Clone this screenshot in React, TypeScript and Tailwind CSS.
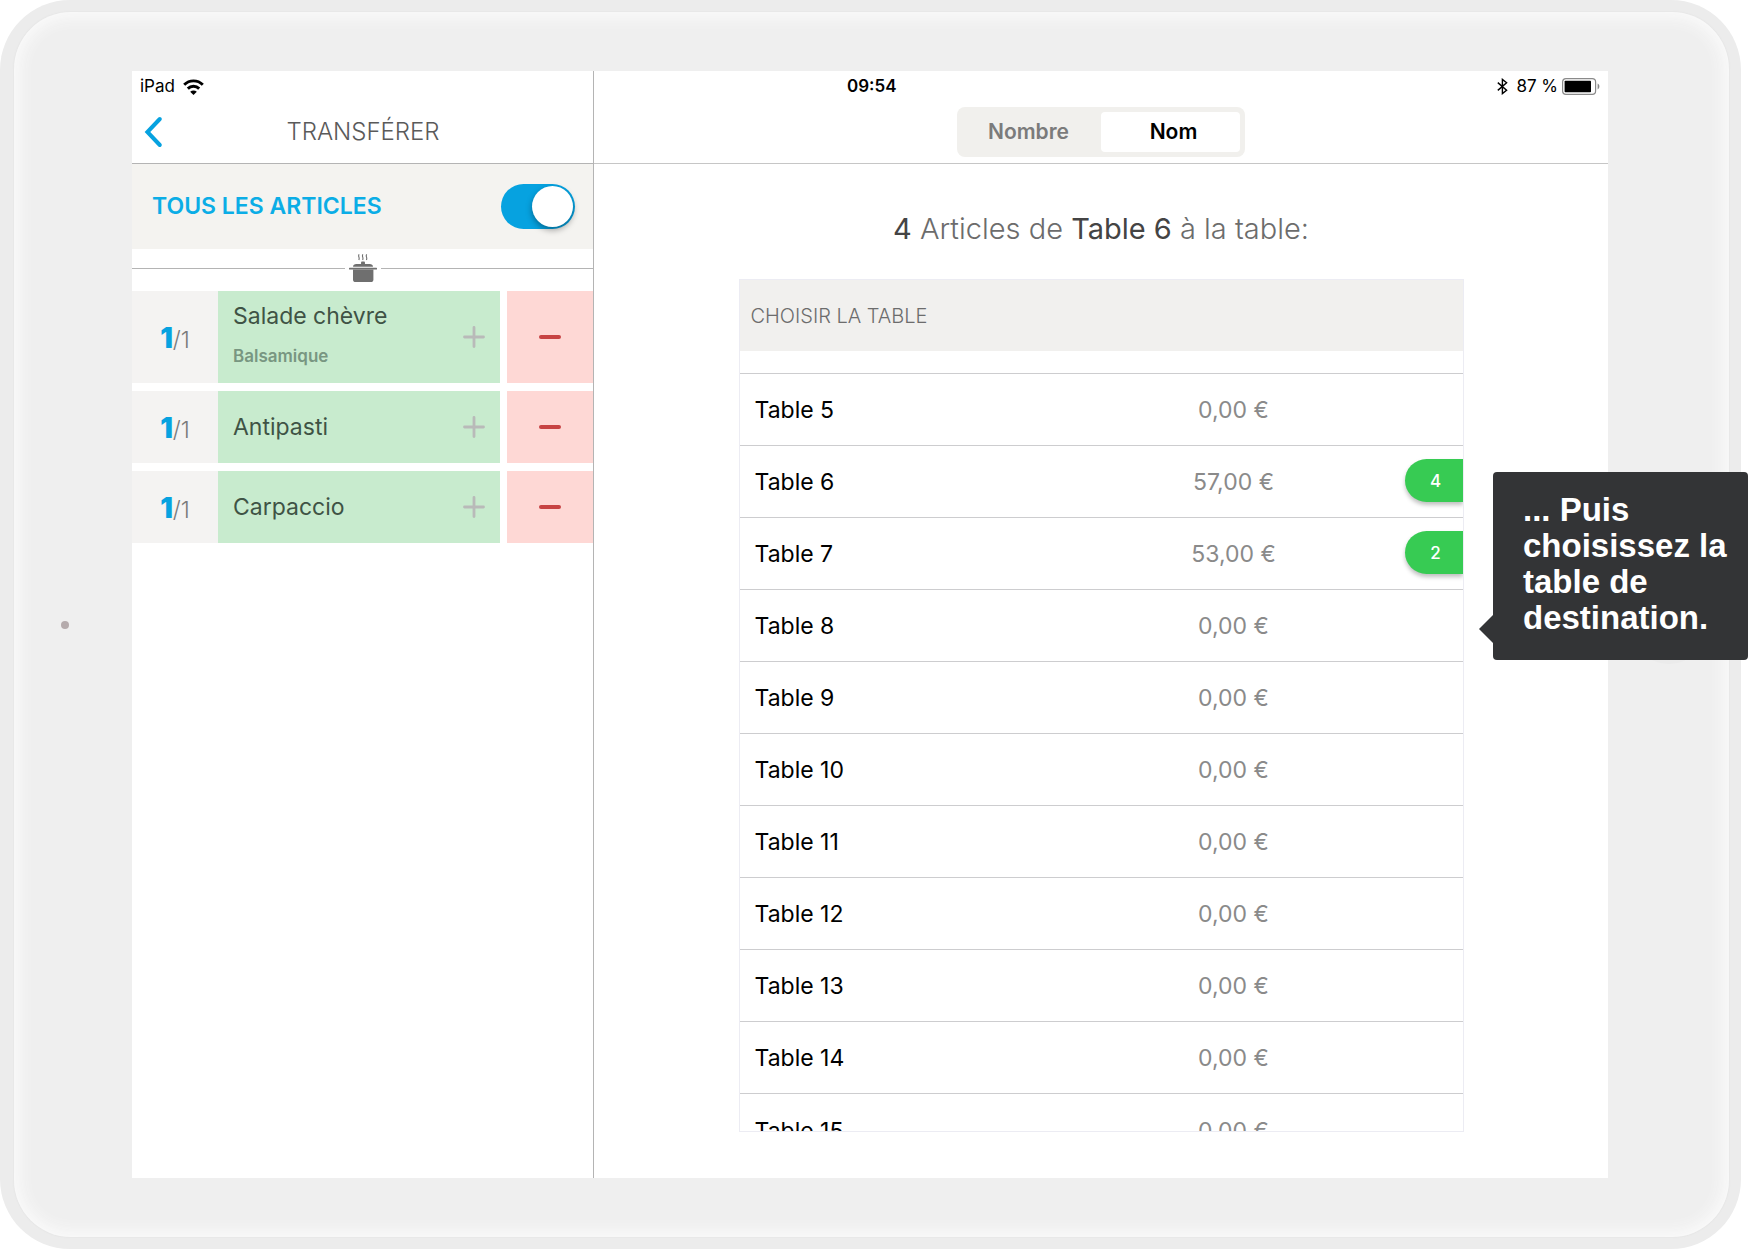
import React, { useState } from "react";

type Item = { name: string; note?: string };
type TableRow = { name: string; total: string; count?: number };

const items: Item[] = [
  { name: "Salade chèvre", note: "Balsamique" },
  { name: "Antipasti" },
  { name: "Carpaccio" },
];

const tables: TableRow[] = [
  { name: "Table 5", total: "0,00 €" },
  { name: "Table 6", total: "57,00 €", count: 4 },
  { name: "Table 7", total: "53,00 €", count: 2 },
  { name: "Table 8", total: "0,00 €" },
  { name: "Table 9", total: "0,00 €" },
  { name: "Table 10", total: "0,00 €" },
  { name: "Table 11", total: "0,00 €" },
  { name: "Table 12", total: "0,00 €" },
  { name: "Table 13", total: "0,00 €" },
  { name: "Table 14", total: "0,00 €" },
  { name: "Table 15", total: "0,00 €" },
];

function WifiIcon() {
  return (
    <svg width="21" height="16" viewBox="0 0 21 16" fill="none" stroke="#000" strokeWidth="2.9" aria-hidden="true">
      <path d="M1.2 5.8 C6.4 0.6 14.6 0.6 19.8 5.8" />
      <path d="M4.8 9.6 C8 6.4 13 6.4 16.2 9.6" />
      <path d="M10.5 16 L7.2 12.7 C9 11 12 11 13.8 12.7 Z" fill="#000" stroke="none" />
    </svg>
  );
}

function BluetoothIcon() {
  return (
    <svg width="11" height="17" viewBox="0 0 11 17" fill="none" stroke="#000" strokeWidth="1.4" aria-hidden="true">
      <path d="M0.8 4.6 L9.6 12.2 L5.4 15.6 V1.4 L9.6 4.8 L0.8 12.4" />
    </svg>
  );
}

function BatteryIcon() {
  return (
    <svg width="38" height="17" viewBox="0 0 38 17" aria-hidden="true">
      <rect x="0.6" y="0.6" width="33" height="15.8" rx="3.4" fill="#fff" stroke="#8a8a8a" strokeWidth="1.2" />
      <rect x="2.6" y="2.8" width="26.4" height="11.4" rx="0.8" fill="#000" />
      <path d="M35.6 5.6 C38 6.4 38 10.6 35.6 11.4 Z" fill="#8a8a8a" />
    </svg>
  );
}

function PotIcon() {
  return (
    <svg width="28" height="29" viewBox="0 0 28 29" fill="#6f6f6f" aria-hidden="true">
      <g fill="none" stroke="#6f6f6f" strokeWidth="1.1">
        <path d="M10.2 0.4 C8.4 2 11.2 3.6 9.8 6" />
        <path d="M14 0.4 C12.2 2 15 3.6 13.6 6" />
        <path d="M17.8 0.4 C16 2 18.8 3.6 17.4 6" />
      </g>
      <rect x="12" y="7.6" width="4" height="3" rx="1" />
      <path d="M4 12.8 C4 10.8 5.6 9.9 7.2 9.9 H20.8 C22.4 9.9 24 10.8 24 12.8 Z" />
      <rect x="0" y="13.8" width="28" height="1.8" rx="0.6" />
      <path d="M4 15.4 H24.4 V25.4 C24.4 27.2 23.4 28 21.8 28 H6.6 C5 28 4 27.2 4 25.4 Z" />
    </svg>
  );
}

function ItemRow({ item }: { item: Item }) {
  return (
    <li className="flex gap-[7px]">
      <div className={item.note ? "flex h-[92px] flex-1" : "flex h-[72px] flex-1"}>
        <div className="flex w-[86px] items-center justify-center bg-[#f4f3f2] pt-0.5">
          <p className="flex items-baseline">
            <span className="text-[28px] leading-none font-black text-[#06a2e0]">1</span>
            <span className="text-[23px] leading-none font-light text-[#7a7a7a]">/1</span>
          </p>
        </div>
        <button
          type="button"
          aria-label={`Ajouter ${item.name}`}
          className="flex flex-1 items-center justify-between bg-[#c8ebce] pr-[15px] pl-[15px] text-left"
        >
          <span className={item.note ? "flex flex-col gap-3.5 pb-1" : "flex flex-col"}>
            <span className="text-[23px] leading-7 text-[#3f5345]">{item.name}</span>
            {item.note && <span className="text-[17px] leading-6 font-semibold text-[#789681]">{item.note}</span>}
          </span>
          <svg width="22" height="22" viewBox="0 0 22 22" stroke="#b9bab9" strokeWidth="2.8" strokeLinecap="round" aria-hidden="true">
            <path d="M11 1.5 V20.5 M1.5 11 H20.5" />
          </svg>
        </button>
      </div>
      <button
        type="button"
        aria-label={`Retirer ${item.name}`}
        className="flex w-[86px] items-center justify-center bg-[#fed8d5]"
      >
        <span className="h-1 w-[22px] rounded-full bg-[#c74444]" />
      </button>
    </li>
  );
}

function LeftPane() {
  const [all, setAll] = useState(true);
  return (
    <aside className="flex w-[462px] shrink-0 flex-col border-r border-[#b4b4b4]">
      <header className="border-b border-[#b4b4b4]">
        <div className="flex h-[29px] items-center gap-2 pt-0.5 pl-2 text-[17px] text-black">
          <span>iPad</span>
          <WifiIcon />
        </div>
        <div className="grid h-[63px] grid-cols-[42px_1fr_53px] items-center pl-3">
          <button type="button" aria-label="Retour">
            <svg width="20" height="32" viewBox="0 0 20 32" fill="none" stroke="#06a2e0" strokeWidth="4" strokeLinecap="round" strokeLinejoin="miter" aria-hidden="true">
              <path d="M15.8 3 L3.4 16 L15.8 29" />
            </svg>
          </button>
          <h1 className="text-center text-[24px] font-light text-[#5a5a5a]">TRANSFÉRER</h1>
        </div>
      </header>
      <label className="flex h-[85px] items-center justify-between bg-[#f4f3f0] pr-[18px] pl-5">
        <span className="text-[23px] font-semibold text-[#0bade6]">TOUS LES ARTICLES</span>
        <input
          type="checkbox"
          role="switch"
          checked={all}
          onChange={(e) => setAll(e.target.checked)}
          className="flex h-[45px] w-[74px] appearance-none items-center rounded-full bg-[#c9c9c9] p-0.5 before:size-[41px] before:rounded-full before:bg-white before:shadow-[0_3px_6px_rgba(0,0,0,0.35)] checked:justify-end checked:bg-[#06a2e0]"
        />
      </label>
      <div className="flex h-[42px] items-center gap-1 pb-[3px]">
        <span className="h-px flex-1 bg-[#b4b4b4]" />
        <PotIcon />
        <span className="h-px flex-1 bg-[#b4b4b4]" />
      </div>
      <ul className="flex flex-col gap-2">
        {items.map((item) => (
          <ItemRow key={item.name} item={item} />
        ))}
      </ul>
    </aside>
  );
}

function RightPane() {
  return (
    <main className="flex min-w-0 flex-1 flex-col">
      <header className="border-b border-[#c6c6c6]">
        <div className="flex h-[29px] items-center justify-between pt-0.5 pr-2 pl-[253px] text-[17px] text-black">
          <time className="font-semibold">09:54</time>
          <div className="flex items-center gap-1">
            <BluetoothIcon />
            <span className="pl-1">87 %</span>
            <BatteryIcon />
          </div>
        </div>
        <div className="flex h-[63px] items-center justify-center">
          <div className="grid h-[50px] w-[288px] grid-cols-2 rounded-lg bg-[#f1f0ed] p-[5px] text-[21px] font-semibold">
            <button type="button" aria-pressed="false" className="pr-1.5 text-[#7b7b7b]">
              Nombre
            </button>
            <button type="button" aria-pressed="true" className="rounded-sm bg-white pl-1.5 text-black">
              Nom
            </button>
          </div>
        </div>
      </header>
      <h2 className="pt-[45px] text-center text-[29px] leading-10 font-light text-[#6c6c6c]">
        <span className="font-normal text-[#444]">4</span> Articles de{" "}
        <span className="font-normal text-[#444]">Table 6</span> à la table:
      </h2>
      <section className="mx-auto mt-[30px] mb-[46px] w-full max-w-[725px] border border-[#ececf3]">
        <h3 className="flex h-[71px] items-center bg-[#f1f0ee] pl-[11px] text-[20px] font-light text-[#6c6c6c]">
          CHOISIR LA TABLE
        </h3>
        <div className="h-[780px] overflow-hidden pt-[22px]">
          <table className="w-full table-fixed border-collapse text-[23px]">
            <tbody>
              {tables.map((t) => (
                <tr key={t.name} className="h-[72px] border-t border-[#cdcdcf]">
                  <th scope="row" className="pt-0.5 pl-[15px] text-left font-normal text-black">
                    {t.name}
                  </th>
                  <td className="w-[242px] pt-0.5 text-center text-[#8a8a8a]">{t.total}</td>
                  <td className="w-[108px] pb-0.5">
                    {t.count && (
                      <span className="ml-auto flex h-[43px] w-[58px] items-center justify-center rounded-l-full bg-[#37cb53] pt-0.5 pl-1 text-[17px] font-medium text-white shadow-[0_3px_4px_rgba(0,0,0,0.25)]">
                        {t.count}
                      </span>
                    )}
                  </td>
                </tr>
              ))}
            </tbody>
          </table>
        </div>
      </section>
    </main>
  );
}

export default function App() {
  return (
    <div className="relative min-h-screen overflow-hidden bg-white font-['Inter',sans-serif]">
      <div className="mr-[7px] rounded-[70px] bg-[#ececec] py-3 pr-3 pl-[14px]">
        <div className="flex rounded-[57px] bg-[#efefef] py-[59px] shadow-[inset_0_0_16px_5px_#fbfbfb,0_0_2px_#dcdcdc]">
          <div className="flex w-[118px] shrink-0 items-center pl-[47px]">
            <span className="size-2 rounded-full bg-[#b5abac]" />
          </div>
          <div className="flex min-w-0 flex-1 bg-white">
            <LeftPane />
            <RightPane />
          </div>
          <div className="flex w-[121px] shrink-0 items-center justify-center">
            <span className="size-[78px] rounded-full bg-[#ebebeb]" />
          </div>
        </div>
      </div>
      <div
        role="tooltip"
        className="absolute top-[472px] right-0 w-[255px] rounded bg-[#333436] pt-5 pr-1 pb-6 pl-[30px] font-['Liberation_Sans',sans-serif] text-[33px] leading-9 font-bold text-white"
      >
        ... Puis choisissez la table de destination.
        <svg width="14" height="28" viewBox="0 0 14 28" className="absolute bottom-[17px] -left-[14px]" aria-hidden="true">
          <path d="M14 0 L0 14 L14 28 Z" fill="#333436" />
        </svg>
      </div>
    </div>
  );
}
